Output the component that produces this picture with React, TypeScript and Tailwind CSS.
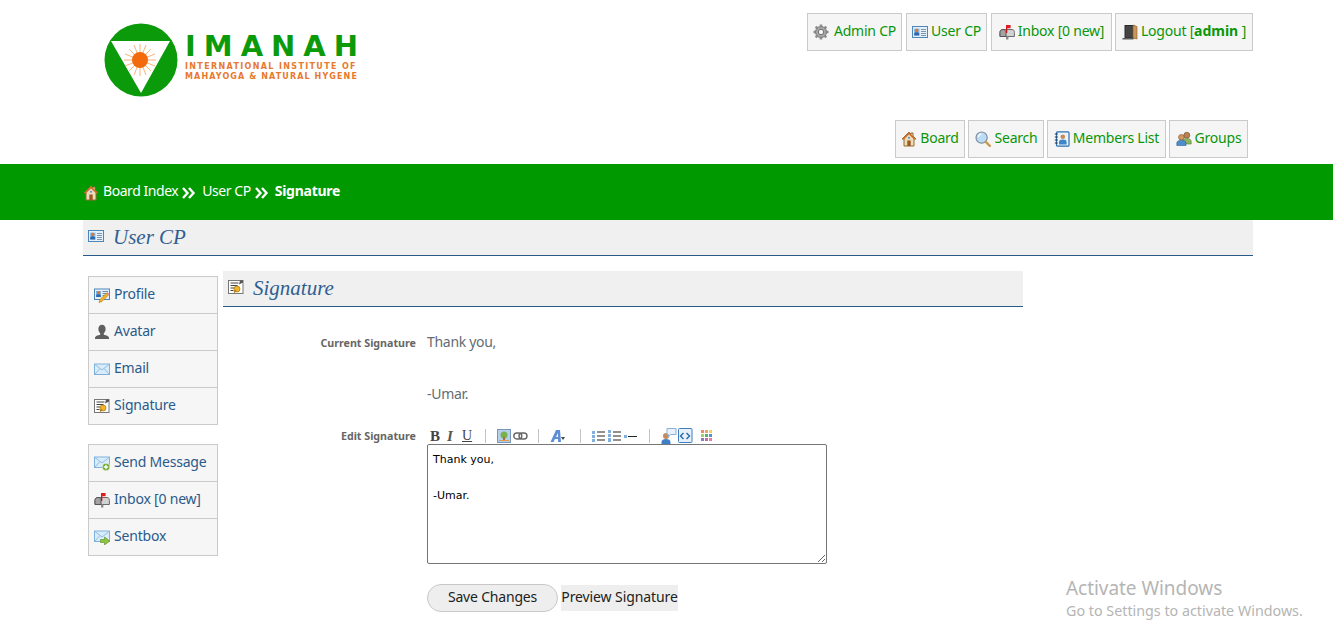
import React from "react";

const S = ({ children, size = 16, className = "" }: { children: React.ReactNode; size?: number; className?: string }) => (
  <svg width={size} height={size} viewBox="0 0 16 16" className={"shrink-0 " + className}>{children}</svg>
);

const Gear = () => (
  <S>
    <g stroke="#8f8f8f" strokeWidth="2.6">
      <line x1="8" y1="0.5" x2="8" y2="15.5" /><line x1="0.5" y1="8" x2="15.5" y2="8" />
      <line x1="2.7" y1="2.7" x2="13.3" y2="13.3" /><line x1="13.3" y1="2.7" x2="2.7" y2="13.3" />
    </g>
    <circle cx="8" cy="8" r="5.5" fill="#a6a6a6" stroke="#7d7d7d" />
    <circle cx="8" cy="8" r="2.7" fill="#f5f5f5" stroke="#707070" />
  </S>
);
const Card = () => (
  <S>
    <rect x="0.5" y="2.5" width="15" height="11" fill="#e6f0fa" stroke="#4f86b8" />
    <rect x="2" y="4.5" width="5.5" height="7" fill="#8dbbe6" />
    <circle cx="4.7" cy="6.4" r="1.7" fill="#d0763f" />
    <path d="M2.2 11.5V9.8c0-1 1-1.500 2.500-1.500s2.500.5 2.500 1.500v1.700z" fill="#2d67ad" />
    <path d="M9 5.5h5M9 7.5h5M9 9.5h5M9 11.5h5" stroke="#7a96b5" />
  </S>
);
const Mailbox = () => (
  <S>
    <path d="M1 8.5c0-2 1.200-3 3-3h9c1.400 0 2.400 1 2.400 3v4H1z" fill="#d2d2d2" stroke="#6b6b6b" />
    <path d="M4 5.5c1.800 0 3 1.200 3 3v4H1v-4c0-2 1.200-3 3-3z" fill="#a3a3a3" stroke="#555" />
    <rect x="7" y="12.5" width="2.4" height="3" fill="#8a8a8a" />
    <rect x="7" y="1" width="1.3" height="8" fill="#c9151b" />
    <rect x="7" y="1" width="4.6" height="3.2" fill="#e01b22" />
  </S>
);
const Door = () => (
  <S>
    <rect x="3" y="1.5" width="9" height="12.5" fill="#444" stroke="#2a2a2a" />
    <path d="M11 1l4 1.600V15l-4-1z" fill="#c79658" stroke="#8a5a25" strokeWidth="0.6" />
    <rect x="0.5" y="14" width="11" height="1.5" fill="#5e5e5e" />
  </S>
);
const Home = () => (
  <S>
    <path d="M8 1L1 8h2v7h10V8h2l-3-3V2h-2v1z" fill="#ecdcb8" stroke="#9a6a33" />
    <path d="M8 1L1 8h2.400L8 3.400 12.600 8H15z" fill="#c9702f" />
    <rect x="6.3" y="9.5" width="3.4" height="5.5" fill="#9b5a25" />
    <circle cx="8" cy="6.8" r="1" fill="#5a8fd0" />
  </S>
);
const Magnifier = () => (
  <S>
    <circle cx="6.6" cy="6.6" r="5.6" fill="#bcdcf5" stroke="#7b8ea0" strokeWidth="1.2" />
    <path d="M3.5 6a3.400 3.400 0 0 1 3-3" stroke="#fff" fill="none" strokeWidth="1.2" />
    <path d="M10.8 10.8L14.800 14.800" stroke="#c99a55" strokeWidth="2.4" strokeLinecap="round" />
  </S>
);
const BookIcon = () => (
  <S>
    <rect x="2.5" y="0.8" width="12.5" height="14.4" rx="1" fill="#eef4fa" stroke="#2d6fb0" strokeWidth="1.2" />
    <circle cx="8.8" cy="5.8" r="2.3" fill="#c98a55" />
    <path d="M5 13.500v-2.500c0-1.600 1.700-2.400 3.800-2.400s3.800.8 3.800 2.400v2.500z" fill="#3c86c9" />
    <path d="M0.800 3h3M0.800 6h3M0.800 9h3M0.800 12h3" stroke="#333" strokeWidth="1" />
  </S>
);
const Users = () => (
  <S>
    <circle cx="10.8" cy="4.3" r="3" fill="#b98252" stroke="#6e4a26" strokeWidth="0.6" />
    <path d="M7 13v-2.600c0-2 1.800-3 3.800-3s4.400 1 4.400 3V13z" fill="#8cb55c" stroke="#5d7e37" strokeWidth="0.6" />
    <circle cx="5.4" cy="6.3" r="2.8" fill="#d59a62" stroke="#6e4a26" strokeWidth="0.6" />
    <path d="M0.800 14.500v-2.400c0-1.900 2-2.800 4.600-2.800s4.600.9 4.600 2.800v2.400z" fill="#4d8ecb" stroke="#2b5f91" strokeWidth="0.6" />
  </S>
);
const ProfileI = () => (
  <S>
    <rect x="0.5" y="2" width="15" height="10.5" fill="#e6f0fa" stroke="#4f86b8" />
    <rect x="2" y="4" width="5" height="6" fill="#7fb1e0" />
    <circle cx="4.5" cy="5.6" r="1.5" fill="#d0763f" />
    <path d="M2.200 10V8.600c0-1 1-1.400 2.300-1.400s2.300.4 2.300 1.400V10z" fill="#2d67ad" />
    <path d="M8.500 4.500h5.500M8.500 6.500h5.500M8.500 8.500h3" stroke="#6c8db0" />
    <path d="M5 15.500l1-3 6.500-6.500 2 2L8 14.500z" fill="#f1b32c" stroke="#a9731a" strokeWidth="0.6" />
    <path d="M12.500 6l1-1 2 2-1 1z" fill="#e785b0" />
  </S>
);
const AvatarI = () => (
  <S>
    <path d="M8 0.800c2.300 0 3.600 1.800 3.600 4.200 0 2-.9 3.400-1.800 4.300v1.400c2.400.5 5.200 1.400 5.200 3V15H1v-1.300c0-1.600 2.800-2.500 5.200-3V9.300C5.300 8.400 4.400 7 4.400 5 4.400 2.600 5.700.8 8 .8z" fill="#5f5f5f" />
  </S>
);
const MailI = () => (
  <S>
    <rect x="0.5" y="3" width="15" height="10.5" fill="#d9ecfb" stroke="#7eb2dc" />
    <path d="M1 3.500l7 5.500 7-5.500M1 13l5-5.500M15 13l-5-5.500" stroke="#8dbde2" fill="none" />
  </S>
);
const SigI = () => (
  <S>
    <rect x="0.5" y="1.5" width="14.5" height="13" fill="#fff" stroke="#777" />
    <path d="M2.500 4h8M2.500 6.500h7M2.500 9h4M2.500 11.500h3" stroke="#444" />
    <path d="M15 1.500l-3 0-1 4 4-2z" fill="#555" />
    <circle cx="9" cy="10" r="3" fill="#f0b429" stroke="#a87712" strokeWidth="0.7" />
    <path d="M6 13.500l2-2" stroke="#a87712" strokeWidth="1.4" />
  </S>
);
const MailPlus = () => (
  <S>
    <rect x="0.5" y="2" width="15" height="10.5" fill="#d9ecfb" stroke="#7eb2dc" />
    <path d="M1 2.500l7 5.500 7-5.500M1 12l5-5.500" stroke="#8dbde2" fill="none" />
    <circle cx="12" cy="12" r="3.8" fill="#6aa82a" stroke="#fff" strokeWidth="0.6" />
    <path d="M12 9.800v4.400M9.800 12h4.400" stroke="#fff" strokeWidth="1.4" />
  </S>
);
const MailArrow = () => (
  <S>
    <rect x="0.5" y="2" width="15" height="10.5" fill="#d9ecfb" stroke="#7eb2dc" />
    <path d="M1 2.500l7 5.500 7-5.500M1 12l5-5.500" stroke="#8dbde2" fill="none" />
    <path d="M6.500 10.500h4V8L15.800 12l-5.300 4v-2.500h-4z" fill="#8cc63f" stroke="#5b8c1f" strokeWidth="0.6" />
  </S>
);
const Chevrons = () => (
  <svg width="14" height="12" viewBox="0 0 14 12" className="shrink-0 mx-[4px] mt-[2px]">
    <path d="M1 1l4.500 5L1 11M7 1l4.500 5L7 11" fill="none" stroke="#fff" strokeWidth="2.4" />
  </svg>
);

const TopBtn = ({ w, icon, children, cls = "" }: { w: string; icon: React.ReactNode; children: React.ReactNode; cls?: string }) => (
  <a className={`${w} ${cls} h-[38px] flex items-center justify-center gap-[3px] border border-[#cacaca] bg-[#f5f5f5] text-[#0a960a] text-[14px] tracking-[-0.22px] whitespace-nowrap`}>
    {icon}
    <span className="pb-[4px]">{children}</span>
  </a>
);

const SideItem = ({ icon, children, last }: { icon: React.ReactNode; children: React.ReactNode; last?: boolean }) => (
  <a className={`flex items-center pl-[5px] gap-[4px] text-[14px] tracking-[-0.2px] text-[#2a5a8a] whitespace-nowrap ${last ? "h-[36px]" : "h-[37px] border-b border-[#cacaca]"}`}>
    {icon}
    <span className="pb-[3px]">{children}</span>
  </a>
);

const Logo = () => (
  <div className="flex items-start">
    <svg width="74" height="74" viewBox="0 0 74 74" className="shrink-0">
      <circle cx="37" cy="37" r="36.5" fill="#0a9a0a" />
      <path d="M7 18h59L37 70z" fill="#fff" />
      <g stroke="#f8b27a" strokeWidth="1">
        <path d="M36 21v32M20 37h32M25 26l22 22M47 26L25 48M30 22l12 30M42 22L30 52M21 31l30 12M51 31L21 43" />
      </g>
      <circle cx="36" cy="37" r="8" fill="#f26a0c" />
    </svg>
    <div className="ml-[7px] mt-[10px] font-['DejaVu_Sans',sans-serif] font-bold">
      <div className="text-[#0a9a0a] text-[29px] leading-[26px] tracking-[8px] whitespace-nowrap">IMANAH</div>
      <div className="text-[#e8792e] text-[8px] leading-[10px] mt-[3px] tracking-[1.35px] whitespace-nowrap">INTERNATIONAL INSTITUTE OF</div>
      <div className="text-[#e8792e] text-[8px] leading-[10px] tracking-[1.12px] whitespace-nowrap">MAHAYOGA &amp; NATURAL HYGENE</div>
    </div>
  </div>
);

const TB = ({ children }: { children: React.ReactNode }) => <span className="h-[16px] flex items-center">{children}</span>;
const Sep = ({ cls }: { cls: string }) => <span className={`w-px h-[14px] bg-[#c4c4c4] shrink-0 ${cls}`} />;

const Toolbar = () => (
  <div className="h-[16px] flex items-center pl-[3px]">
    <span className="w-[14px] font-['Liberation_Serif',serif] font-bold text-[15px] leading-none text-[#444]">B</span>
    <span className="w-[16px] pl-[3px] font-['Liberation_Serif',serif] font-bold italic text-[15px] leading-none text-[#555]">I</span>
    <span className="w-[14px] pl-[2px] font-['Liberation_Serif',serif] text-[14px] leading-none text-[#444] underline">U</span>
    <Sep cls="ml-[11px]" />
    <TB>
      <svg width="14" height="14" viewBox="0 0 14 14" className="ml-[11px]">
        <rect x="0.5" y="0.5" width="13" height="13" fill="#b5d0ec" stroke="#7796b8" />
        <circle cx="7" cy="6" r="3.5" fill="#7ab04e" />
        <rect x="6" y="8" width="2" height="3" fill="#a9703a" />
        <rect x="2" y="11" width="10" height="1" fill="#e09a4a" />
      </svg>
    </TB>
    <TB>
      <svg width="15" height="8" viewBox="0 0 15 8" className="ml-[2px]">
        <rect x="0.8" y="1" width="8" height="6" rx="3" fill="none" stroke="#666" strokeWidth="1.4" />
        <rect x="6" y="1" width="8" height="6" rx="3" fill="none" stroke="#666" strokeWidth="1.4" />
      </svg>
    </TB>
    <Sep cls="ml-[10px]" />
    <TB>
      <svg width="16" height="14" viewBox="0 0 16 14" className="ml-[11px]">
        <path d="M0.500 13L6 1h4l1 12H8V10H5l-1.500 3z" fill="#5e8fd6" />
        <path d="M6 8h2V4z" fill="#fff" />
        <path d="M11 8h4l-2 3z" fill="#444" />
      </svg>
    </TB>
    <Sep cls="ml-[14px]" />
    <TB>
      <svg width="46" height="14" viewBox="0 0 46 14" className="ml-[11px]">
        <g fill="#7fb0e0"><rect x="0" y="2" width="3" height="3" /><rect x="0" y="6" width="3" height="3" /><rect x="0" y="10" width="3" height="3" /><rect x="16" y="1" width="3" height="3" /><rect x="16" y="5" width="3" height="3" /><rect x="16" y="9" width="3" height="4" /><rect x="32" y="6" width="3" height="3" /></g>
        <path d="M5 3h8M5 7h8M5 11h8M21 3h8M21 7h8M21 11h8M36 7.500h9" stroke="#222" strokeWidth="1" />
      </svg>
    </TB>
    <Sep cls="ml-[11px]" />
    <TB>
      <svg width="16" height="16" viewBox="0 0 16 16" className="ml-[11px]">
        <circle cx="5" cy="8" r="3" fill="#c98a55" />
        <path d="M0.500 16v-2c0-2 2-3 4.500-3s4.500 1 4.500 3v2z" fill="#3e80c8" />
        <path d="M6 0.500h9v6H9.500L7.500 9V6.500H6z" fill="#e8f1fa" stroke="#8ab0d6" />
      </svg>
    </TB>
    <TB>
      <svg width="16" height="16" viewBox="0 0 16 16">
        <rect x="1.5" y="0.5" width="13.5" height="14" rx="1" fill="#e8f1fa" stroke="#3f7ec0" />
        <path d="M6.500 5L3.500 8l3 3M9.500 5l3 3-3 3" fill="none" stroke="#2d6fb0" strokeWidth="1.5" />
      </svg>
    </TB>
    <TB>
      <svg width="14" height="14" viewBox="0 0 14 14" className="ml-[7px]">
        <rect x="1" y="1" width="3" height="3" fill="#ee8a6a" /><rect x="5" y="1" width="3" height="3" fill="#f0a35a" /><rect x="9" y="1" width="3" height="3" fill="#f3d060" />
        <rect x="1" y="5" width="3" height="3" fill="#9fd06a" /><rect x="5" y="5" width="3" height="3" fill="#5ab06a" /><rect x="9" y="5" width="3" height="3" fill="#5a8fd0" />
        <rect x="1" y="9" width="3" height="3" fill="#8a7ac0" /><rect x="5" y="9" width="3" height="3" fill="#c06ab0" /><rect x="9" y="9" width="3" height="3" fill="#ee7aa0" />
      </svg>
    </TB>
  </div>
);

export default function App() {
  return (
    <div className="relative h-[624px] overflow-hidden bg-white font-['Noto_Sans','Open_Sans',sans-serif] text-[14px]">
      <header className="h-[164px] ml-[83px] w-[1170px] flex justify-between">
        <div className="ml-[21px] mt-[23px]"><Logo /></div>
        <div className="flex flex-col items-end">
          <nav className="mt-[13px] flex gap-[4px]">
            <TopBtn w="w-[95px]" icon={<Gear />} cls="gap-[5px]">Admin CP</TopBtn>
            <TopBtn w="w-[81px]" icon={<Card />}>User CP</TopBtn>
            <TopBtn w="w-[121px]" icon={<Mailbox />}>Inbox [0 new]</TopBtn>
            <TopBtn w="w-[138px] -ml-px" icon={<Door />}>Logout [<b className="text-[14px] tracking-normal">admin</b> ]</TopBtn>
          </nav>
          <nav className="mt-[69px] mr-[5px] flex gap-[3px]">
            <TopBtn w="w-[70px]" icon={<Home />}>Board</TopBtn>
            <TopBtn w="w-[76px]" icon={<Magnifier />} cls="gap-[4px]">Search</TopBtn>
            <TopBtn w="w-[119px]" icon={<BookIcon />}>Members List</TopBtn>
            <TopBtn w="w-[79px]" icon={<Users />}>Groups</TopBtn>
          </nav>
        </div>
      </header>

      <div className="h-[56px] bg-[#009900] flex items-center pl-[83px] text-white whitespace-nowrap tracking-[-0.45px]">
        <span className="mr-[4px] mt-[2px]"><Home /></span>
        <span className="pb-[3px]">Board Index</span>
        <Chevrons />
        <span className="ml-[2px] pb-[3px]">User CP</span>
        <Chevrons />
        <b className="ml-[2px] pb-[3px] text-[14px] tracking-[-0.25px]">Signature</b>
      </div>

      <div className="ml-[83px] w-[1170px]">
        <div className="h-[36px] bg-[#f0f0f0] border-b border-[#2a5a8a] flex items-center pl-[5px] pb-[3px]">
          <Card />
          <h1 className="ml-[9px] pt-[4px] font-['Liberation_Serif',serif] italic text-[21px] text-[#2f5f92]">User CP</h1>
        </div>

        <div className="flex mt-[15px]">
          <aside className="w-[130px] ml-[5px] mt-[5px] shrink-0">
            <div className="border border-[#cacaca] bg-[#f6f6f6]">
              <SideItem icon={<ProfileI />}>Profile</SideItem>
              <SideItem icon={<AvatarI />}>Avatar</SideItem>
              <SideItem icon={<MailI />}>Email</SideItem>
              <SideItem icon={<SigI />} last>Signature</SideItem>
            </div>
            <div className="mt-[19px] border border-[#cacaca] bg-[#f6f6f6]">
              <SideItem icon={<MailPlus />}>Send Message</SideItem>
              <SideItem icon={<Mailbox />}>Inbox [0 new]</SideItem>
              <SideItem icon={<MailArrow />} last>Sentbox</SideItem>
            </div>
          </aside>

          <main className="w-[800px] ml-[5px]">
            <div className="h-[36px] bg-[#f0f0f0] border-b border-[#2a5a8a] flex items-center pl-[5px] pb-[3px]">
              <SigI />
              <h2 className="ml-[9px] pt-[4px] font-['Liberation_Serif',serif] italic text-[21px] text-[#2f5f92]">Signature</h2>
            </div>

            <div className="flex mt-[25px]">
              <div className="w-[193px] pt-[5px] text-right font-bold text-[10.7px] text-[#666] leading-[13px]">Current Signature</div>
              <div className="ml-[11px] text-[#646c74] text-[14px] tracking-[-0.3px]">
                <div className="h-[52px] leading-[20px]">Thank you,</div>
                <div className="leading-[20px]">-Umar.</div>
              </div>
            </div>

            <div className="flex mt-[24px]">
              <div className="w-[193px] pt-[2px] text-right font-bold text-[10.7px] text-[#666] leading-[13px]">Edit Signature</div>
              <div className="ml-[11px] w-[400px]">
                <Toolbar />
                <textarea
                  readOnly
                  defaultValue={"Thank you,\n\n-Umar."}
                  className="block w-[400px] h-[120px] border border-[#767676] rounded-[2px] px-[5px] py-[6px] font-['DejaVu_Sans',sans-serif] text-[11px] leading-[18px] text-black outline-none"
                />
                <div className="mt-[20px] flex items-center">
                  <button className="w-[131px] h-[28px] pb-[4px] rounded-full border border-[#c8c8c8] bg-[#eeeeee] text-[14px] tracking-[-0.2px] text-[#222]">Save Changes</button>
                  <button className="ml-[3px] w-[117px] h-[26px] pb-[4px] bg-[#eeeeee] text-[14px] tracking-[-0.1px] text-[#222] whitespace-nowrap">Preview Signature</button>
                </div>
              </div>
            </div>
          </main>
        </div>
      </div>

      <div className="absolute left-[1066px] top-[576px] text-[#b5b5b5] pointer-events-none whitespace-nowrap">
        <div className="text-[19px] leading-[25px] tracking-[-0.05px]">Activate Windows</div>
        <div className="text-[14.3px] leading-[18px] mt-[1px]">Go to Settings to activate Windows.</div>
      </div>
    </div>
  );
}
